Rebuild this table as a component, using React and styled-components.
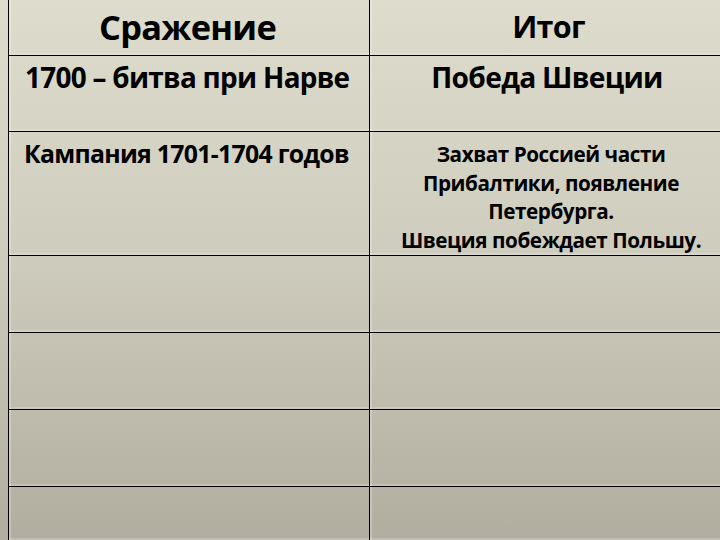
import React from "react";
import styled, { createGlobalStyle } from "styled-components";

const GlobalStyle = createGlobalStyle`
  html, body {
    margin: 0;
    padding: 0;
  }
  body {
    width: 720px;
    height: 540px;
    overflow: hidden;
    font-family: "Open Sans", "Noto Sans", "DejaVu Sans", sans-serif;
    background: linear-gradient(180deg, #dddccd 0%, #cfcdbe 45%, #b1ae9f 100%);
  }
`;

const Page = styled.div`
  width: 720px;
  height: 540px;
  padding-left: 8px;
  box-sizing: border-box;
`;

const Table = styled.div`
  display: grid;
  grid-template-columns: 361px 351px;
  grid-template-rows: 56px 76px 124px 77px 77px 77px 1fr;
  height: 100%;
  border-left: 1px solid #000;
  box-sizing: border-box;
`;

const Cell = styled.div`
  box-sizing: border-box;
  border-bottom: ${(p) => (p.$last ? "none" : "1px solid #000")};
  border-right: ${(p) => (p.$left ? "1px solid #000" : "none")};
  box-shadow: inset 3px 0 0 -1px rgba(255, 255, 255, 0.25),
    inset 0 -3px 0 -1px rgba(255, 255, 255, 0.2);
  display: flex;
  flex-direction: column;
  align-items: ${(p) => (p.$center ? "center" : "flex-start")};
  text-align: ${(p) => (p.$center ? "center" : "left")};
  padding: ${(p) => p.$pad || "0"};
  color: #000;
  font-weight: 700;
  font-size: ${(p) => p.$size || "28px"};
  line-height: ${(p) => p.$lh || "1.2"};
  letter-spacing: ${(p) => p.$ls || "-0.7px"};
  white-space: nowrap;
`;

const rows = [
  {
    left: "1700 – битва при Нарве",
    leftSize: "27.9px",
    leftPad: "5px 0 0 16px",
    right: ["Победа Швеции"],
  },
  {
    left: "Кампания 1701-1704 годов",
    leftSize: "24.8px",
    leftPad: "7px 0 0 15px",
    right: [
      "Захват Россией части",
      "Прибалтики, появление",
      "Петербурга.",
      "Швеция побеждает Польшу.",
    ],
  },
  { left: "", right: [] },
  { left: "", right: [] },
  { left: "", right: [] },
  { left: "", right: [] },
];

export default function App() {
  return (
    <>
      <GlobalStyle />
      <Page>
        <Table>
          <Cell $left $center $size="34.4px" $pad="6px 3px 0 0">
            Сражение
          </Cell>
          <Cell $center $size="30.5px" $pad="8px 0 0 6px">
            Итог
          </Cell>
          {rows.map((r, i) => (
            <React.Fragment key={i}>
              <Cell
                $left
                $last={i === rows.length - 1}
                $size={r.leftSize}
                $pad={r.leftPad || "0"}
              >
                {r.left}
              </Cell>
              <Cell
                $center
                $last={i === rows.length - 1}
                $pad={r.right.length > 1 ? "8px 0 0 11px" : "5px 0 0 3px"}
                $size={r.right.length > 1 ? "20.7px" : "28.2px"}
                $lh={r.right.length > 1 ? "28.5px" : "1.2"}
                $ls={r.right.length > 1 ? "-0.45px" : "-0.7px"}
              >
                {r.right.map((line) => (
                  <span key={line}>{line}</span>
                ))}
              </Cell>
            </React.Fragment>
          ))}
        </Table>
      </Page>
    </>
  );
}
